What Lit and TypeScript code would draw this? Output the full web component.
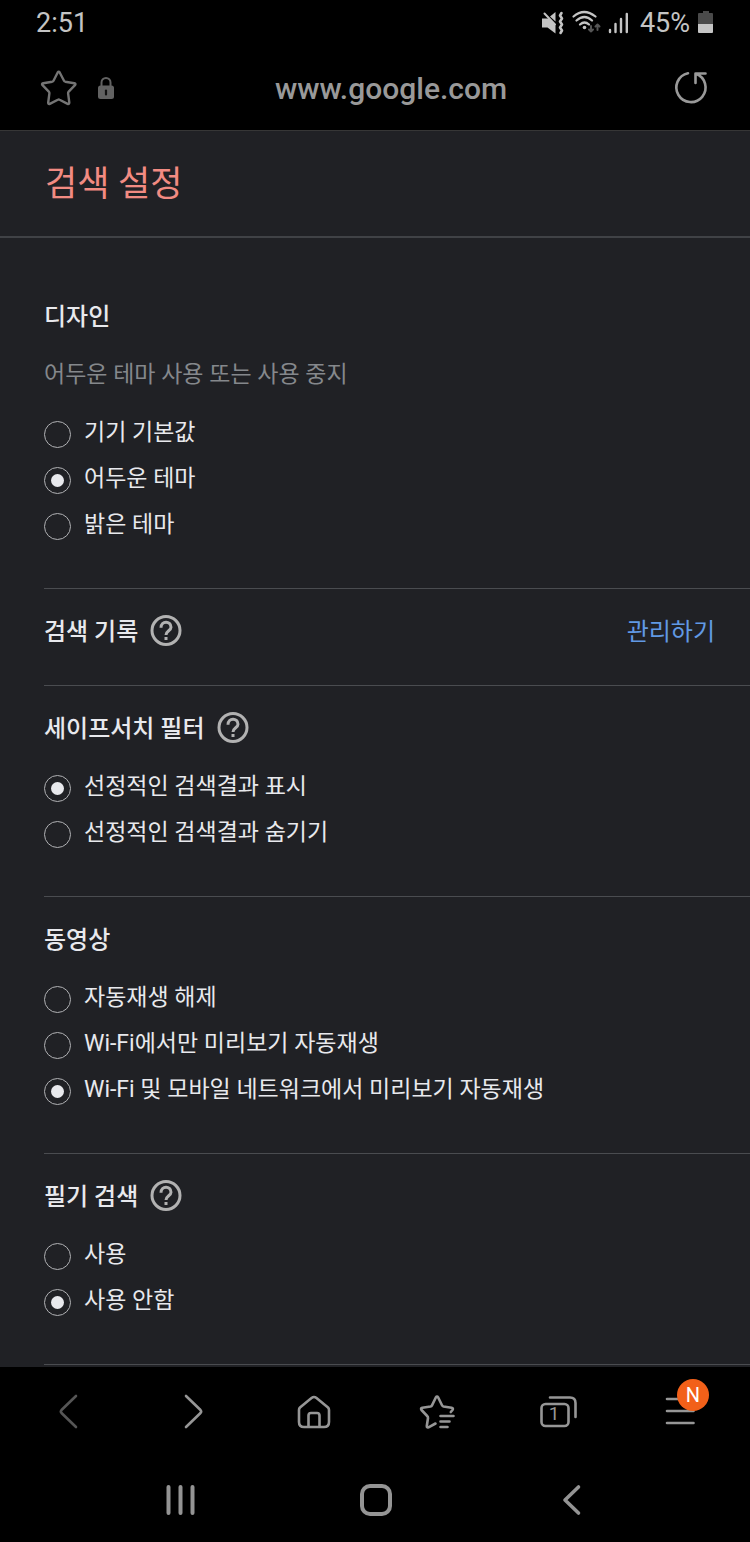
import { LitElement, html, css, svg, nothing } from "lit";
import { customElement, property, state } from "lit/decorators.js";

interface Section {
  id: string;
  title: string;
  note?: string;
  help?: boolean;
  link?: string;
  options?: string[];
}

const SECTIONS: Section[] = [
  {
    id: "design",
    title: "디자인",
    note: "어두운 테마 사용 또는 사용 중지",
    options: ["기기 기본값", "어두운 테마", "밝은 테마"],
  },
  { id: "history", title: "검색 기록", help: true, link: "관리하기" },
  {
    id: "safe",
    title: "세이프서치 필터",
    help: true,
    options: ["선정적인 검색결과 표시", "선정적인 검색결과 숨기기"],
  },
  {
    id: "video",
    title: "동영상",
    options: [
      "자동재생 해제",
      "Wi-Fi에서만 미리보기 자동재생",
      "Wi-Fi 및 모바일 네트워크에서 미리보기 자동재생",
    ],
  },
  { id: "handwriting", title: "필기 검색", help: true, options: ["사용", "사용 안함"] },
];

const base = css`
  * {
    box-sizing: border-box;
  }
  button {
    appearance: none;
    border: 0;
    padding: 0;
    margin: 0;
    background: none;
    color: inherit;
    font: inherit;
    display: flex;
    align-items: center;
    justify-content: center;
  }
  svg {
    display: block;
    fill: none;
    stroke: currentColor;
    stroke-linecap: round;
    stroke-linejoin: round;
  }
`;

@customElement("status-bar")
class StatusBar extends LitElement {
  static styles = [
    base,
    css`
      :host {
        display: flex;
        align-items: center;
        height: 46px;
        padding: 0 36px;
        color: #c4c4c4;
        font-size: 27px;
        line-height: 30px;
      }
      .time {
        flex: 1;
      }
      .icons {
        margin-right: 11px;
      }
      .battery {
        margin-left: 8px;
      }
    `,
  ];

  render() {
    return html`
      <span class="time">2:51</span>
      <svg class="icons" width="88" height="26" viewBox="541 9 88 26" aria-hidden="true">
        <g fill="currentColor" stroke="none">
          <path d="M542 17.500h6.500l7 7v8l-8-6h-5.500z" />
          <path d="M550 15.500l5.500-4.500v9.500z" />
        </g>
        <path d="M544.500 12.500L555 23.500" stroke-width="2" />
        <path d="M561.500 12l-1.500 2.500 2 3-2 3 2 3-2 3 2 3-1.500 2.500" stroke-width="2.600" />
        <path
          d="M573.500 15.500Q584 6.500 595.500 15.500M576.500 19.500Q584.500 12.500 592 19.500M580 23.500Q584.500 19.500 589 23.500"
          stroke-width="2.200"
        />
        <circle cx="584.500" cy="26.500" r="1.800" fill="currentColor" stroke="none" />
        <path
          d="M591 25v5.500M589 28.500l2 2 2-2M597.500 29v-5.500M595.500 25.500l2-2 2 2"
          stroke="#555"
          stroke-width="2"
        />
        <path d="M610 29v2M615.500 23v8M621 18v13M626.800 13v18" stroke-width="2.400" />
      </svg>
      <span>45%</span>
      <svg class="battery" width="16" height="24" viewBox="0 0 16 24" aria-hidden="true">
        <g stroke="none">
          <path d="M5 0h6v2h3q1 0 1 1v10H0V3q0-1 1-1h4z" fill="#4a4a4a" />
          <path d="M0 13h15v8q0 1-1 1H1q-1 0-1-1z" fill="#c4c4c4" />
        </g>
      </svg>
    `;
  }
}

@customElement("address-bar")
class AddressBar extends LitElement {
  static styles = [
    base,
    css`
      :host {
        display: flex;
        align-items: center;
        height: 85px;
        padding: 0 31px 0 40px;
        border-bottom: 1px solid #363636;
        color: #999;
      }
      .star {
        color: #747474;
      }
      .lock {
        margin-left: 19px;
        color: #626262;
      }
      .url {
        flex: 1;
        padding-top: 2px;
        padding-left: 4px;
        text-align: center;
        font-size: 30px;
        line-height: 36px;
        font-weight: 500;
      }
      .reload {
        width: 56px;
        height: 56px;
      }
    `,
  ];

  render() {
    return html`
      <button class="star" aria-label="북마크">
        <svg width="38" height="38" viewBox="40 69 38 38" stroke-width="2.400">
          <path
            d="M57.700 72.500q1-1.600 2 0l4.300 8.200q.4.800 1.300 1l9 1.500q1.900.5.700 2l-6.300 6.500q-.7.700-.6 1.600l1.200 9.200q0 2-1.700 1.400l-8-4.200q-.9-.5-1.800 0l-8 4.200q-1.700.6-1.600-1.400l1.200-9.200q.1-.9-.6-1.600l-6.300-6.500q-1.200-1.500.7-2l9-1.500q.9-.2 1.300-1z"
          />
        </svg>
      </button>
      <svg class="lock" width="18" height="24" viewBox="97 76 18 24" aria-hidden="true">
        <path d="M101.500 87v-4.500a4.500 4.500 0 0 1 9 0V87" stroke-width="2" />
        <rect x="98" y="85.500" width="16" height="13.500" rx="2.500" fill="currentColor" stroke="none" />
        <path d="M106 90.500v4" stroke="#111" stroke-width="2.200" />
      </svg>
      <span class="url">www.google.com</span>
      <button class="reload" aria-label="새로고침">
        <svg width="36" height="36" viewBox="673 70 36 36" stroke-width="2.600">
          <path d="M688 73.200A14.600 14.600 0 1 0 696 73.800M695.500 83V73.500H705.500" />
        </svg>
      </button>
    `;
  }
}

@customElement("setting-section")
class SettingSection extends LitElement {
  @property({ attribute: false }) section!: Section;
  @property({ type: Number }) selected = -1;

  static styles = [
    base,
    css`
      :host {
        display: block;
        margin-left: 44px;
        border-bottom: 1px solid #4a4c50;
        padding: 20px 0 39px;
      }
      :host([first]) {
        padding-top: 56px;
      }
      :host([compact]) {
        padding-bottom: 30px;
      }
      .head {
        display: flex;
        align-items: center;
        gap: 12px;
        height: 46px;
      }
      h2 {
        margin: 0;
        font-size: 24px;
        line-height: 32px;
        font-weight: 500;
      }
      .help {
        color: #b2b2b2;
      }
      .question {
        stroke-linecap: butt;
      }
      a {
        margin-left: auto;
        margin-right: 35px;
        color: #6199e4;
        text-decoration: none;
        font-size: 24px;
        line-height: 32px;
      }
      .note {
        margin: 0;
        padding: 18px 0 6px;
        color: #85888c;
        font-size: 23px;
        line-height: 34px;
      }
      .options {
        margin: 13px 0 0;
        padding: 0;
        border: 0;
        min-width: 0;
      }
      label {
        display: flex;
        align-items: center;
        gap: 13px;
        height: 46px;
        font-size: 23px;
        line-height: 34px;
      }
      .text {
        padding-bottom: 2px;
      }
      input {
        appearance: none;
        flex: none;
        width: 27px;
        height: 27px;
        margin: 0;
        border: 1px solid #b0b1b4;
        border-radius: 50%;
        display: grid;
        place-items: center;
      }
      input:checked::before {
        content: "";
        width: 13px;
        height: 13px;
        border-radius: 50%;
        background: #e8e9ed;
      }
    `,
  ];

  render() {
    const s = this.section;
    return html`
      <div class="head">
        <h2>${s.title}</h2>
        ${s.help
          ? html`<button class="help" aria-label="도움말">
              <svg width="32" height="34" viewBox="0 0 32 34" stroke-width="3">
                <circle cx="16" cy="15.500" r="14" />
                <path
                  class="question"
                  d="M11 12.700C11 5.500 21 5.500 21 12.200C21 15.700 16 15.800 16 20M16 22v3"
                />
              </svg>
            </button>`
          : nothing}
        ${s.link ? html`<a href="#">${s.link}</a>` : nothing}
      </div>
      ${s.note ? html`<p class="note">${s.note}</p>` : nothing}
      ${s.options
        ? html`<fieldset class="options" aria-label=${s.title}>
            ${s.options.map(
              (text, i) => html`<label>
                <input
                  type="radio"
                  name=${s.id}
                  .checked=${i === this.selected}
                  @change=${() => (this.selected = i)}
                />
                <span class="text">${text}</span>
              </label>`
            )}
          </fieldset>`
        : nothing}
    `;
  }
}

@customElement("browser-toolbar")
class BrowserToolbar extends LitElement {
  static styles = [
    base,
    css`
      :host {
        display: grid;
        grid-template-columns: repeat(6, 1fr);
        padding: 0 9px;
        height: 88px;
        color: #969696;
      }
      button {
        position: relative;
      }
      button:disabled {
        color: #565656;
      }
      .count {
        position: absolute;
        left: 0;
        right: 8px;
        top: 35px;
        font-size: 19px;
        line-height: 24px;
      }
      .badge {
        position: absolute;
        left: calc(50% - 3px);
        top: 12px;
        width: 32px;
        height: 32px;
        border-radius: 50%;
        background: #f26019;
        color: #fff;
        font-size: 20px;
        line-height: 32px;
        font-weight: 400;
      }
    `,
  ];

  private icon(shape: unknown) {
    return html`<svg width="48" height="48" viewBox="0 0 48 48" stroke-width="2.600">${shape}</svg>`;
  }

  render() {
    return html`
      <button disabled aria-label="이전">
        ${this.icon(svg`<path d="M30 9L15.500 23Q14.200 24.500 15.500 26L30 40" />`)}
      </button>
      <button aria-label="다음">
        ${this.icon(svg`<path d="M18 9L32.500 23Q33.800 24.500 32.500 26L18 40" />`)}
      </button>
      <button aria-label="홈">
        ${this.icon(svg`<path d="M10 20.500Q9 21.500 9 23V35Q9 40 14 40H34Q39 40 39 35V23Q39 21.500 38 20.500L26.500 11Q24 9 21.500 11ZM18.500 40V28.500Q18.500 26 21 26H27Q29.500 26 29.500 28.500V40" />`)}
      </button>
      <button aria-label="북마크 목록">
        ${this.icon(svg`<path d="M23.500 36.500L16.500 40.300Q14.700 41 14.800 39L16 31Q16 29.800 15.200 29L9.500 23Q8.300 21.200 10.300 20.700L18.500 19.500Q19.500 19.300 20 18.300L23.800 10.500Q25 8.700 26.200 10.500L30 18.300Q30.500 19.300 31.500 19.500L39.500 20.700Q41.700 21.200 40.500 23L38.800 25M28.500 29H41.500M28.500 34.500H37.500M28.500 40H35.500" />`)}
      </button>
      <button aria-label="탭">
        ${this.icon(svg`<rect x="7.500" y="17" width="27" height="22" rx="4" /><path d="M16 10.500H36Q41.500 10.500 41.500 16V30" />`)}
        <span class="count">1</span>
      </button>
      <button aria-label="메뉴">
        ${this.icon(svg`<path d="M11 12H37.500M11 24H37.500M11 36H37.500" />`)}
        <span class="badge">N</span>
      </button>
    `;
  }
}

@customElement("system-nav")
class SystemNav extends LitElement {
  static styles = [
    base,
    css`
      :host {
        display: grid;
        grid-template-columns: repeat(3, 1fr);
        height: 87px;
        padding: 0 11%;
        color: #949494;
      }
    `,
  ];

  render() {
    return html`
      <button aria-label="최근 앱">
        <svg width="40" height="40" viewBox="0 0 40 40" stroke-width="4">
          <path d="M8.500 8V34M20.500 8V34M32.500 8V34" />
        </svg>
      </button>
      <button aria-label="홈 화면">
        <svg width="40" height="40" viewBox="0 0 40 40" stroke-width="4">
          <rect x="7" y="7" width="28" height="28" rx="8" />
        </svg>
      </button>
      <button aria-label="뒤로">
        <svg width="40" height="40" viewBox="0 0 40 40" stroke-width="3.600">
          <path d="M28.500 8L15 21L28.500 34" />
        </svg>
      </button>
    `;
  }
}

@customElement("app-root")
class AppRoot extends LitElement {
  @state() private selection: Record<string, number> = {
    design: 1,
    safe: 0,
    video: 2,
    handwriting: 1,
  };

  static styles = [
    base,
    css`
      :host {
        display: flex;
        flex-direction: column;
        min-height: 100vh;
        background: #000;
        color: #e8e9ed;
        font-family: Roboto, "Noto Sans CJK KR", sans-serif;
      }
      main {
        flex: 1;
        background: #202125;
        padding-bottom: 2px;
      }
      .title {
        display: flex;
        align-items: center;
        height: 107px;
        padding: 2px 45px 0;
        border-bottom: 2px solid #404246;
      }
      h1 {
        margin: 0;
        color: #f28b82;
        font-size: 35px;
        line-height: 48px;
        font-weight: 400;
      }
    `,
  ];

  render() {
    return html`
      <status-bar></status-bar>
      <address-bar></address-bar>
      <main>
        <header class="title"><h1>검색 설정</h1></header>
        ${SECTIONS.map(
          (s, i) => html`<setting-section
            .section=${s}
            .selected=${this.selection[s.id] ?? -1}
            ?first=${i === 0}
            ?compact=${!s.options}
          ></setting-section>`
        )}
      </main>
      <browser-toolbar></browser-toolbar>
      <system-nav></system-nav>
    `;
  }
}
